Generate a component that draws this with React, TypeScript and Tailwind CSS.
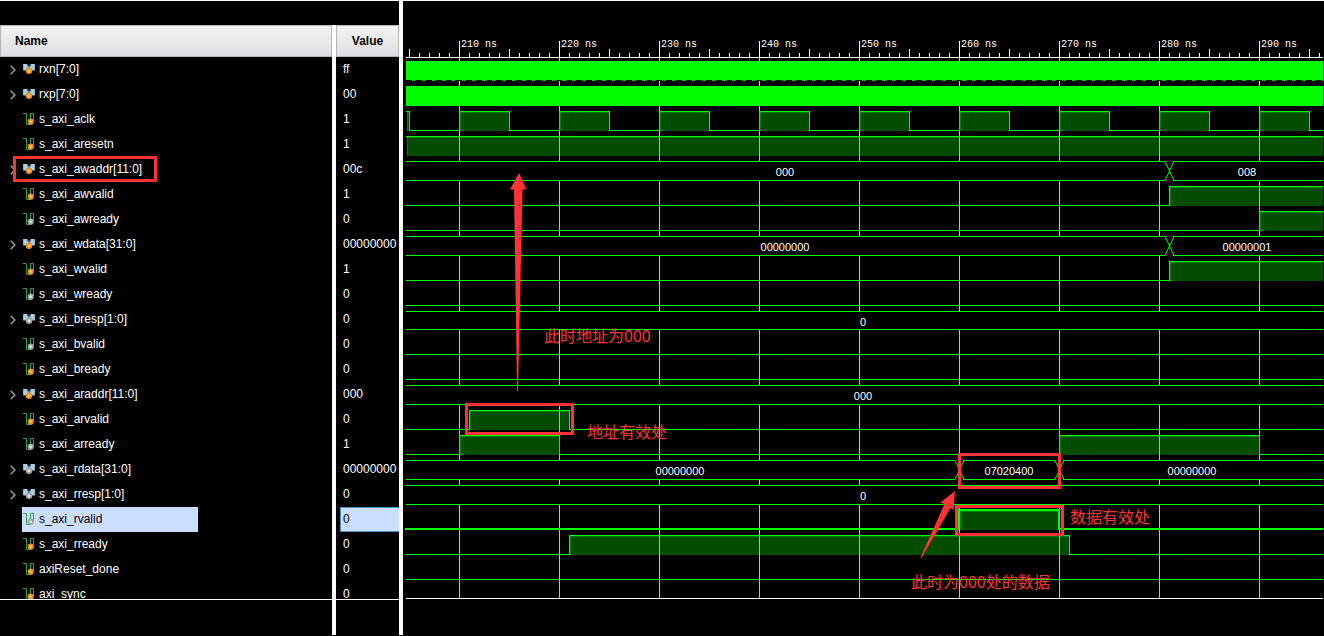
import React, { useState } from 'react';
import clsx from 'clsx';

type Level = [from: number, to: number];
type BusValue = [from: number, to: number, text: string];

interface Signal {
  name: string;
  value: string;
  dir: 'in' | 'out';
  bus?: boolean;
  solid?: boolean;
  high?: Level[];
  values?: BusValue[];
  marked?: boolean;
}

// visible time window in ns
const START = 204.7;
const END = 296.4;

const clock: Level[] = [[START, 205], [210, 215], [220, 225], [230, 235], [240, 245], [250, 255], [260, 265], [270, 275], [280, 285], [290, 295]];

const signals: Signal[] = [
  { name: 'rxn[7:0]', value: 'ff', dir: 'in', bus: true, solid: true },
  { name: 'rxp[7:0]', value: '00', dir: 'in', bus: true, solid: true },
  { name: 's_axi_aclk', value: '1', dir: 'in', high: clock },
  { name: 's_axi_aresetn', value: '1', dir: 'in', high: [[START, END]] },
  { name: 's_axi_awaddr[11:0]', value: '00c', dir: 'in', bus: true, marked: true, values: [[START, 281, '000'], [281, END, '008']] },
  { name: 's_axi_awvalid', value: '1', dir: 'in', high: [[281, END]] },
  { name: 's_axi_awready', value: '0', dir: 'out', high: [[290, END]] },
  { name: 's_axi_wdata[31:0]', value: '00000000', dir: 'in', bus: true, values: [[START, 281, '00000000'], [281, END, '00000001']] },
  { name: 's_axi_wvalid', value: '1', dir: 'in', high: [[281, END]] },
  { name: 's_axi_wready', value: '0', dir: 'out', high: [] },
  { name: 's_axi_bresp[1:0]', value: '0', dir: 'out', bus: true, values: [[START, END, '0']] },
  { name: 's_axi_bvalid', value: '0', dir: 'out', high: [] },
  { name: 's_axi_bready', value: '0', dir: 'in', high: [] },
  { name: 's_axi_araddr[11:0]', value: '000', dir: 'in', bus: true, values: [[START, END, '000']] },
  { name: 's_axi_arvalid', value: '0', dir: 'in', high: [[211, 221]] },
  { name: 's_axi_arready', value: '1', dir: 'out', high: [[210, 220], [270, 290]] },
  { name: 's_axi_rdata[31:0]', value: '00000000', dir: 'out', bus: true, values: [[START, 260, '00000000'], [260, 270, '07020400'], [270, END, '00000000']] },
  { name: 's_axi_rresp[1:0]', value: '0', dir: 'out', bus: true, values: [[START, END, '0']] },
  { name: 's_axi_rvalid', value: '0', dir: 'out', high: [[260, 270]] },
  { name: 's_axi_rready', value: '0', dir: 'in', high: [[221, 271]] },
  { name: 'axiReset_done', value: '0', dir: 'in', high: [] },
  { name: 'axi_sync', value: '0', dir: 'in' },
];

const LEFT = 1;
const RIGHT = 4000;
const timeX = (t: number) => (t === START ? LEFT : Math.round(54 + (t - 210) * 10));
const rowY = (i: number) => 28 + i * 25 - (i > 10 ? 1 : 0);

const Chevron: React.FC = () => (
  <svg width="6" height="10" viewBox="0 0 6 10" fill="none" stroke="#9a9a9a" strokeWidth="1.5">
    <path d="M0.7 0.8 L4.9 5 L0.7 9.2" />
  </svg>
);

const SignalIcon: React.FC<{ bus?: boolean; dir: 'in' | 'out' }> = ({ bus, dir }) => {
  const outer = dir === 'in' ? '#f08c1e' : '#a4a4a4';
  const inner = dir === 'in' ? '#ffc878' : '#e8e8e8';
  if (bus) {
    return (
      <svg width="13" height="13" viewBox="0 0 13 13" className="shrink-0">
        <path d="M0 2 H4.5 V3.5 H7.5 V2 H12 V8.5 H0 Z" fill="#5f7682" />
        <path d="M0.3 2 H4.2 V4.2 L5.6 5.6 L3.4 8.3 H0.3 Z M11.7 2 H7.8 V4.2 L6.6 5.6 L8.8 8.3 H11.7 Z" fill="#a5cfe4" />
        <circle cx="6" cy="8.7" r="3.2" fill={outer} />
        <circle cx="6" cy="8.7" r="1.5" fill={inner} />
      </svg>
    );
  }
  return (
    <svg width="13" height="13" viewBox="0 0 13 13" className="shrink-0">
      <path d="M0 1.5 H3.5 V12.5 H7.5 V1.5 H10.5 V9" fill="none" stroke="#32a046" strokeWidth="1" />
      <circle cx="7.7" cy="9.7" r="3.1" fill={outer} />
      <circle cx="7.7" cy="9.7" r="1.3" fill={inner} />
    </svg>
  );
};

const Ruler: React.FC = () => {
  const ticks = Array.from({ length: 92 }, (_, i) => 205 + i);
  return (
    <g fill="#ffffff" shapeRendering="crispEdges">
      {ticks.map((t) => {
        const h = t % 10 === 0 ? 16 : t % 5 === 0 ? 8 : 4;
        return <rect key={t} x={timeX(t)} y={24 - h} width="1" height={h} />;
      })}
      {ticks.filter((t) => t % 10 === 0).map((t) => (
        <g key={t}>
          <rect x={timeX(t)} y="25" width="1" height="540" fill="#c0c0c0" />
          <text x={timeX(t) + 2} y="14" className="font-['Liberation_Mono'] text-[10px]">{t} ns</text>
        </g>
      ))}
      <rect x={LEFT} y="24" width={RIGHT} height="1" />
    </g>
  );
};

const BitWave: React.FC<{ y: number; high: Level[]; active: boolean }> = ({ y, high, active }) => {
  // the selected wave is two pixels thick, so it is centred on whole pixels
  const half = active ? 0 : 0.5;
  const top = y + half;
  const low = y + 19 + half;
  let d = `M${active ? 0 : LEFT} ${high.length > 0 && high[0][0] === START ? top : low}`;
  high.forEach(([from, to]) => {
    if (from !== START) d += ` H${timeX(from) + half} V${top}`;
    if (to !== END) d += ` H${timeX(to) + half} V${low}`;
  });
  d += ` H${RIGHT}`;

  return (
    <g shapeRendering="crispEdges">
      {high.map(([from, to]) => {
        const x = timeX(from) + 1;
        const end = to === END ? RIGHT : timeX(to);
        return (
          <g key={from} fill="#00ff00">
            <rect x={x} y={y + 1} width={end - x} height="19" fillOpacity="0.3" />
            <rect x={x} y={y + 1} width={end - x} height="1" fillOpacity="0.3" />
            <rect x={x} y={y + 1} width="1" height="19" fillOpacity="0.3" />
          </g>
        );
      })}
      <path d={d} fill="none" stroke="#00ff00" strokeWidth={active ? 2 : 1} />
    </g>
  );
};

const BusWave: React.FC<{ y: number; height: number; values: BusValue[] }> = ({ y, height, values }) => (
  <g>
    <rect x={LEFT} y={y} width={RIGHT} height={height} fill="#000000" />
    {values.map(([from, to, text]) => {
      const x1 = from === START ? LEFT : timeX(from) + 4;
      const x2 = to === END ? RIGHT : timeX(to) - 4;
      const mid = Math.floor((x1 + Math.min(x2, 916)) / 2);
      return (
        <g key={from}>
          <path d={`M${x1} ${y + 0.5} H${x2} M${x1} ${y + height + 0.5} H${x2}`} stroke="#00ff00" shapeRendering="crispEdges" />
          {to !== END && (
            <path
              d={`M${x2} ${y + 0.5} L${x2 + 9} ${y + height + 0.5} M${x2} ${y + height + 0.5} L${x2 + 9} ${y + 0.5}`}
              stroke="#00ff00"
            />
          )}
          <text x={mid} y={y + 15} textAnchor="middle" fill="#ffffff" className="font-['Liberation_Sans'] text-[11px]">
            {text}
          </text>
        </g>
      );
    })}
  </g>
);

const SolidWave: React.FC<{ y: number; dotted: boolean }> = ({ y, dotted }) => (
  <g fill="#00ff00" shapeRendering="crispEdges">
    <rect x={LEFT} y={y} width={RIGHT} height={dotted ? 19 : 20} />
    {dotted && (
      <>
        <rect x={LEFT} y={y + 19} width={RIGHT} height="1" fill="#000000" />
        <path d={`M7 ${y + 19.5} H${RIGHT}`} stroke="#00ff00" strokeDasharray="1 1 1 7" />
      </>
    )}
  </g>
);

// red notes drawn over the waveforms
const Notes: React.FC = () => (
  <g fill="#ff3333">
    <g fill="none" stroke="#ff3333" strokeWidth="3">
      <rect x="61.5" y="371.5" width="106" height="29" />
      <rect x="554.5" y="421.5" width="100" height="33" />
      <rect x="551.5" y="473.5" width="106" height="28" />
    </g>
    <path d="M114 140 L121.5 156.5 H117.5 L113 358 H112 L109 156.5 H105 Z" />
    <path d="M550 458 L535.5 469.5 L539.5 471 L515.5 524.5 L516.5 525 L545.5 475 L548.5 477 Z" />
    <g className="font-['Noto_Sans_CJK_SC',sans-serif] text-[16px]">
      <text x="139" y="309">此时地址为000</text>
      <text x="182" y="405">地址有效处</text>
      <text x="665" y="490">数据有效处</text>
      <text x="506" y="555">此时为000处的数据</text>
    </g>
  </g>
);

const App: React.FC = () => {
  const [selected, setSelected] = useState('s_axi_rvalid');

  return (
    <div className="flex flex-col min-h-screen bg-black border-t border-white font-['Liberation_Sans',sans-serif] text-xs text-white">
      <div className="flex flex-1 pb-px">
        {/* Signal names */}
        <section className="w-[332px] shrink-0 mt-6">
          <div className="h-[575px] overflow-hidden border-b border-white">
            <table className="w-full border-separate border-spacing-0">
              <thead>
                <tr>
                  <th className="h-8 p-0 pl-3.5 text-left font-bold text-black border border-[#b4b4b4] bg-linear-to-b from-[#f4f4f4] to-[#dedee0]">
                    Name
                  </th>
                </tr>
              </thead>
              <tbody>
                {signals.map((s) => (
                  <tr key={s.name} onClick={() => setSelected(s.name)}>
                    <td className="p-0">
                      <div className="relative flex h-[25px]">
                        <div className="flex items-center w-[22px] pl-2.5">
                          {s.bus && (
                            <button aria-label={`Expand ${s.name}`}>
                              <Chevron />
                            </button>
                          )}
                        </div>
                        <div
                          className={clsx(
                            'flex items-center gap-[3px] w-44 pl-px pb-0.5',
                            s.name === selected && 'bg-[#ccdeff] text-black'
                          )}
                        >
                          <SignalIcon bus={s.bus} dir={s.dir} />
                          <span>{s.name}</span>
                        </div>
                        {s.marked && (
                          <div className="absolute left-[13px] -top-px w-36 h-[26px] border-3 border-[#ff3333]" />
                        )}
                      </div>
                    </td>
                  </tr>
                ))}
              </tbody>
            </table>
          </div>
        </section>
        <div className="w-1 shrink-0 mt-6 bg-white" />

        {/* Values at the cursor */}
        <section className="w-[63px] shrink-0 mt-6">
          <div className="h-[575px] overflow-hidden border-b border-white">
            <table className="w-full table-fixed border-separate border-spacing-0">
              <thead>
                <tr>
                  <th className="h-8 p-0 text-center font-bold text-black border border-[#b4b4b4] bg-linear-to-b from-[#f4f4f4] to-[#dedee0]">
                    Value
                  </th>
                </tr>
              </thead>
              <tbody>
                {signals.map((s) => (
                  <tr key={s.name} onClick={() => setSelected(s.name)}>
                    <td className="p-0 pl-1">
                      <div
                        className={clsx(
                          'flex items-center h-[25px] pl-0.5 pb-0.5 overflow-hidden border border-r-0',
                          s.name === selected ? 'bg-[#ccdeff] text-black border-[#4a90c8]' : 'border-transparent'
                        )}
                      >
                        {s.value}
                      </div>
                    </td>
                  </tr>
                ))}
              </tbody>
            </table>
          </div>
        </section>
        <div className="w-1 shrink-0 bg-white" />

        {/* Waveforms */}
        <section className="flex-1 min-w-0 pt-8 pl-0.5 pr-px">
          <svg className="block w-full h-[566px] overflow-hidden">
            <Ruler />
            {signals.map((s, i) => {
              const y = rowY(i);
              if (s.solid) return <SolidWave key={s.name} y={y} dotted={i === 0} />;
              if (s.values) return <BusWave key={s.name} y={y} height={i === 10 ? 18 : 19} values={s.values} />;
              if (s.high) return <BitWave key={s.name} y={y} high={s.high} active={s.name === selected} />;
              return null;
            })}
            <rect x={LEFT} y="565" width={RIGHT} height="1" fill="#ffffff" />
            <Notes />
          </svg>
        </section>
      </div>
    </div>
  );
};

export default App;
